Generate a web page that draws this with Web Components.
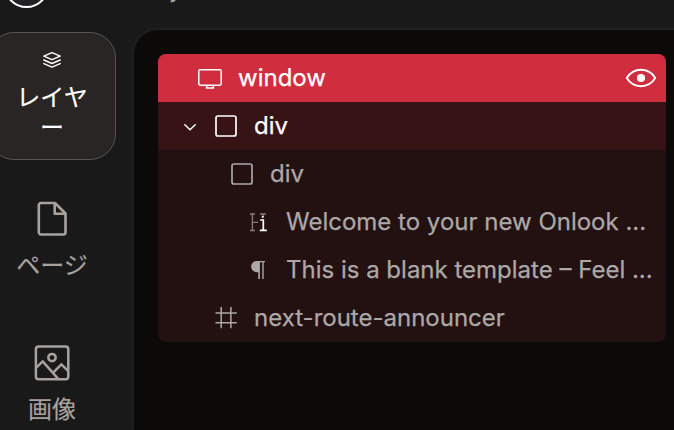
<!DOCTYPE html>
<html lang="ja">
<head>
<meta charset="utf-8">
<title>レイヤー</title>
<style>
html, body { margin: 0; height: 100%; overflow: hidden; background: #191919; }
body { font-family: Inter, "Noto Sans CJK JP", sans-serif; }
</style>
</head>
<body>
<editor-shell>
  <top-bar slot="top"></top-bar>
  <side-nav slot="side">
    <nav-tab icon="layers" active>レイヤー</nav-tab>
    <nav-tab icon="page">ページ</nav-tab>
    <nav-tab icon="image">画像</nav-tab>
  </side-nav>
  <layer-tree>
    <layer-row icon="window" kind="root" style="--indent:40px">window</layer-row>
    <layer-row icon="box" kind="open" style="--indent:56px">div</layer-row>
    <layer-row icon="box" style="--indent:72px">div</layer-row>
    <layer-row icon="heading" style="--indent:88px">Welcome to your new Onlook ...</layer-row>
    <layer-row icon="para" style="--indent:88px">This is a blank template – Feel ...</layer-row>
    <layer-row icon="hash" style="--indent:56px">next-route-announcer</layer-row>
  </layer-tree>
</editor-shell>
<script>
const ICONS = {
  layers: [20, '<g stroke-width="1.4" stroke-linejoin="round" stroke-linecap="round"><path d="M10 2.7 18.2 6.2 10 9.7 1.8 6.2Z"/><path d="M1.8 10 10 13.5 18.2 10M1.8 13.6 10 17.1 18.2 13.6"/></g>'],
  page: [40, '<g stroke-width="2.6" stroke-linejoin="round"><path d="M9 4H23L33.5 14.5V33.3A2.2 2.2 0 0 1 31.3 35.5H9A2.2 2.2 0 0 1 6.8 33.3V6.2A2.2 2.2 0 0 1 9 4Z"/><path d="M22.7 4.5V14.8H33"/></g>'],
  image: [40, '<g stroke-width="2.5" stroke-linejoin="round"><rect x="3.9" y="3.6" width="32.4" height="32.6" rx="2.8"/><circle cx="20" cy="14.6" r="3.7"/><path d="M4 24.8 10.7 18.4 26 35.7M21.4 29.4 29.4 21.4 36 27.8"/></g>'],
  window: [24, '<g stroke-width="1.5"><rect x=".8" y="3.8" width="22.4" height="15.4" rx="1.4"/><path d="M8.6 19.2V22H15.4V19.2"/></g>'],
  box: [24, '<rect x="2" y="2" width="20" height="20" rx="2" stroke-width="1.7"/>'],
  heading: [24, '<g stroke="#857c7b" stroke-width="1.3"><path d="M6.4 4V20.5M4 4H9M4 20.5H9M6.4 12.3H12M14 4H20M17 4V6.4"/></g><g stroke="#fff" stroke-width="1.7"><path d="M14.2 10H17.3V20.4M13.8 20.4H20.8"/></g><circle cx="16.8" cy="6.8" r="1.1" fill="#fff" stroke="none"/>'],
  para: [24, '<path d="M12.3 3H19V4.3H17.7V21H16.3V4.3H13.9V21H12.3V14.2H10.7A5.6 5.6 0 0 1 10.7 3Z" fill="currentColor" stroke="none"/>'],
  hash: [24, '<path d="M7.2 1V22.3M16.9 1V22.3M1.5 7H22.8M1.5 16.8H22.8" stroke-width="1.5"/>'],
  chevron: [24, '<path d="M6.8 9.8 12 14.7 17.2 9.8" stroke-width="1.5" stroke-linecap="round" stroke-linejoin="round"/>'],
  eye: [32, '<path d="M1.8 16C5 10.7 10 7.8 16 7.8S27 10.7 30.2 16C27 21.3 22 24.2 16 24.2S5 21.3 1.8 16Z" stroke-width="1.9" stroke-linejoin="round"/><circle cx="16" cy="16" r="4.1" fill="currentColor" stroke="none"/>']
};
const icon = (name, cls = '') => {
  const [s, body] = ICONS[name];
  return `<svg class="${cls}" width="${s}" height="${s}" viewBox="0 0 ${s} ${s}" fill="none" stroke="currentColor">${body}</svg>`;
};
const define = (tag, render) => customElements.define(tag, class extends HTMLElement {
  connectedCallback() {
    if (!this.shadowRoot) this.attachShadow({ mode: 'open' }).innerHTML = render(this);
  }
});

define('editor-shell', () => `
<style>
:host { display: grid; grid-template: 28px 402px / 132px 542px; width: 674px; height: 430px; overflow: hidden; }
slot[name=top]::slotted(*) { grid-column: 1 / 3; }
</style>
<slot name="top"></slot><slot name="side"></slot><slot></slot>`);

define('top-bar', () => `
<style>
:host { display: flex; align-items: flex-start; height: 28px; overflow: hidden; color: #a8a29e; }
.logo { flex: none; box-sizing: border-box; width: 45px; height: 45px; margin: -37px 0 0 3.5px; border: 2px solid #fff; border-radius: 50%; background: #212226; }
.name { margin: -26px 0 0 120.5px; font-size: 24px; line-height: 30px; -webkit-text-stroke: .3px; }
</style>
<div class="logo"></div><div class="name">y</div>`);

define('side-nav', () => `
<style>
:host { display: flex; flex-direction: column; gap: 16px; padding-top: 4px; margin-left: -12px; width: 128px; }
</style><slot></slot>`);

define('nav-tab', el => `
<style>
:host { display: flex; flex: none; flex-direction: column; align-items: center; justify-content: flex-start; box-sizing: border-box; width: 128px; height: 128px; padding: 22px 27px 0; border: 1px solid transparent; border-radius: 26px; color: #a8a29e; font-size: 24px; line-height: 30px; text-align: center; }
:host([active]) { padding-top: 17px; border-color: #57534e; background: #292524; color: #fff; }
svg { flex: none; margin-bottom: 12px; }
:host([active]) svg { margin-bottom: 13px; }
.label { width: 72px; line-break: anywhere; word-break: break-all; -webkit-text-stroke: .15px; }
</style>${icon(el.getAttribute('icon'))}<div class="label"><slot></slot></div>`);

define('layer-tree', () => `
<style>
:host { display: block; box-sizing: border-box; width: 566px; height: 426px; padding: 24px; border: 2px solid #1f1f1f; border-radius: 26px; background: #0c0a09; }
.rows { width: 508px; border-radius: 8px; overflow: hidden; background: #231011; }
</style><div class="rows"><slot></slot></div>`);

define('layer-row', el => {
  const kind = el.getAttribute('kind');
  return `
<style>
:host { display: flex; align-items: center; box-sizing: border-box; height: 48px; padding-left: var(--indent); color: #aba8a7; font-size: 24px; line-height: 32px; white-space: nowrap; }
:host([kind=root]) { background: #d02d3e; color: #fff; padding-right: 9px; }
:host([kind=open]) { background: #371316; color: #fff; }
svg { flex: none; }
.chevron { margin: 2px 12px 0 -36px; }
.label { flex: 1; margin-left: 16px; -webkit-text-stroke: .25px; }
</style>${kind === 'open' ? icon('chevron', 'chevron') : ''}${icon(el.getAttribute('icon'))}<span class="label"><slot></slot></span>${kind === 'root' ? icon('eye') : ''}`;
});
</script>
</body>
</html>
